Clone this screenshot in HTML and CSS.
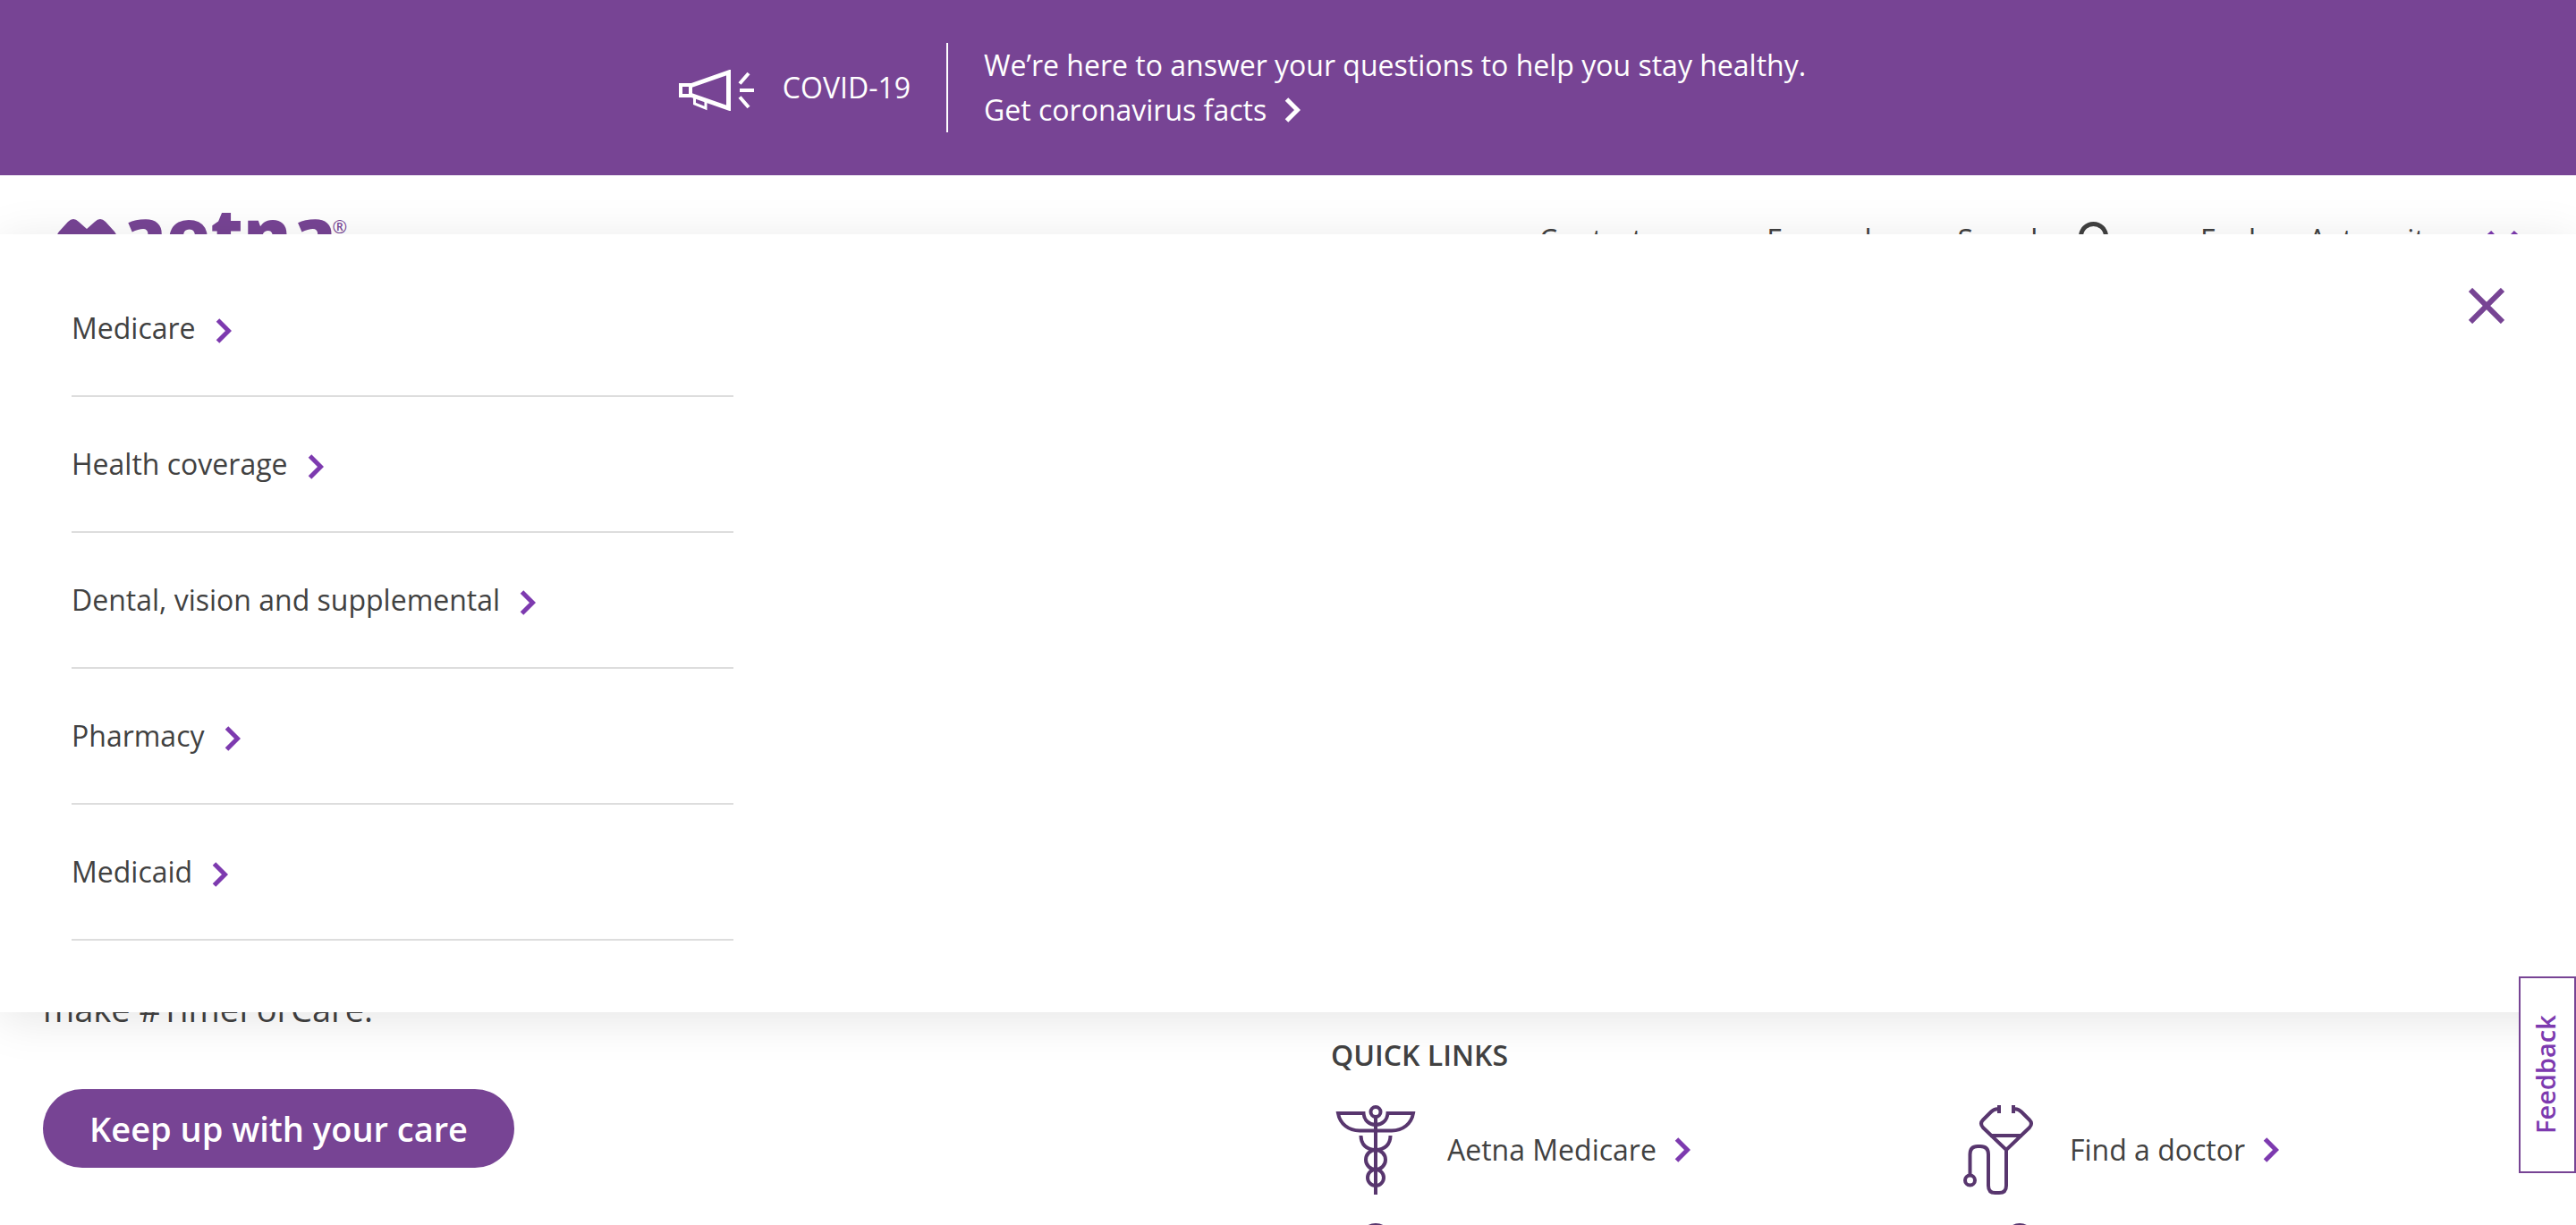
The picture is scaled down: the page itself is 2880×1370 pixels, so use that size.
FILE: index.html
```html
<!DOCTYPE html>
<html lang="en">
<head>
<meta charset="utf-8">
<title>Aetna</title>
<meta name="viewport" content="width=device-width, initial-scale=1">
<link rel="stylesheet" href="styles.css">
</head>
<body>
<svg class="sprite" aria-hidden="true">
  <symbol id="chevron" viewBox="0 0 18 28"><path d="M2.500 2 14.500 14 2.500 26" fill="none" stroke="currentColor" stroke-width="5"/></symbol>
</svg>

<aside class="alert">
  <svg class="alert-icon" viewBox="0 0 84 46" fill="none" stroke="currentColor" aria-hidden="true">
    <path d="M14 17.500 55.500 3V43L14 28.500" stroke-width="5"/>
    <path d="M2 17h11v12H2z" stroke-width="4"/>
    <path d="M17.500 31v7l12.500 5v-7" stroke-width="3"/>
    <path d="M68 15.500 78 4M68 23H84M68 30.500 78 42" stroke-width="4"/>
  </svg>
  <strong class="alert-title">COVID-19</strong>
  <div class="alert-body">
    <p>We’re here to answer your questions to help you stay healthy.</p>
    <a href="#facts">Get coronavirus facts <svg class="chevron"><use href="#chevron"/></svg></a>
  </div>
</aside>

<header class="header">
  <a class="logo" href="#home">
    <svg class="logo-mark" viewBox="0 0 68 60" aria-hidden="true"><path d="M33 60 3 27Q-3 21 2 15L12 4Q18-2 24 4L33 12 42 4Q48-2 54 4L64 15Q69 21 63 27Z" fill="currentColor"/></svg>
    <span class="logo-name">aetna</span><span class="logo-reg">®</span>
  </a>
  <nav class="nav">
    <a href="#contact">Contact us</a>
    <a href="#es">Espanol</a>
    <a class="nav-search" href="#search">Search
      <svg class="nav-icon" viewBox="0 0 40 40" fill="none" stroke="currentColor" stroke-width="5" aria-hidden="true"><circle cx="16.500" cy="16.500" r="14"/><path d="M26 26 38 38"/></svg>
    </a>
    <a class="nav-explore" href="#sites">Explore Aetna sites
      <svg class="nav-icon" viewBox="0 0 40 24" fill="none" stroke="currentColor" stroke-width="6" aria-hidden="true"><path d="M5 2 20 18 35 2"/></svg>
    </a>
  </nav>
</header>

<main class="main">
  <section class="hero">
    <p class="hero-text">make #TimeForCare.</p>
    <a class="button" href="#care">Keep up with your care</a>
  </section>
  <section class="quick">
    <h2>QUICK LINKS</h2>
    <ul class="quick-list">
      <li><a href="#medicare">
        <svg class="quick-icon" viewBox="0 0 100 100" fill="none" stroke="currentColor" stroke-width="4" aria-hidden="true">
          <circle cx="50" cy="7.500" r="5.500"/>
          <path d="M50 13V100"/>
          <path d="M50 22C43 22 37 17 36.500 9H8C10 21 20 28.500 32 28.500H68C80 28.500 90 21 92 9H63.500C63 17 57 22 50 22"/>
          <path d="M33.500 34C33.500 44 40 50 50 50M66.500 34C66.500 44 60 50 50 50"/>
          <circle cx="50" cy="61" r="11"/><circle cx="50" cy="81" r="9"/>
        </svg>
        <span>Aetna Medicare</span><svg class="chevron"><use href="#chevron"/></svg></a></li>
      <li><a href="#doctor">
        <svg class="quick-icon" viewBox="0 0 100 100" fill="none" stroke="currentColor" stroke-width="4" aria-hidden="true">
          <path d="M51 0V9M67 0V9"/>
          <path d="M51 4.500Q46 3.500 42 7.500L33 16.500Q29 20.500 33 25L59 50 85 25Q89 20.500 85 16.500L76 7.500Q72 3.500 67 4.500"/>
          <path d="M41 34H77"/>
          <path d="M59 50V90Q59 98 51 98H46.500Q39 98 39 90V55Q39 46 30 46H27Q18.500 46 18.500 55V78"/>
          <circle cx="18.500" cy="84" r="5.500"/>
        </svg>
        <span>Find a doctor</span><svg class="chevron"><use href="#chevron"/></svg></a></li>
      <li><a href="#login" aria-label="Member log in">
        <svg class="quick-icon" viewBox="0 0 100 100" fill="none" stroke="currentColor" stroke-width="4" aria-hidden="true"><circle cx="50" cy="18" r="16"/></svg></a></li>
      <li><a href="#drug" aria-label="Find a medication">
        <svg class="quick-icon" viewBox="0 0 100 100" fill="none" stroke="currentColor" stroke-width="4" aria-hidden="true"><circle cx="74" cy="16" r="14"/></svg></a></li>
    </ul>
  </section>
</main>

<nav class="panel" aria-label="Explore Aetna sites">
  <ul class="panel-list">
    <li><a href="#m1">Medicare <svg class="chevron"><use href="#chevron"/></svg></a></li>
    <li><a href="#m2">Health coverage <svg class="chevron"><use href="#chevron"/></svg></a></li>
    <li><a href="#m3">Dental, vision and supplemental <svg class="chevron"><use href="#chevron"/></svg></a></li>
    <li><a href="#m4">Pharmacy <svg class="chevron"><use href="#chevron"/></svg></a></li>
    <li><a href="#m5">Medicaid <svg class="chevron"><use href="#chevron"/></svg></a></li>
  </ul>
  <button class="close" type="button" aria-label="Close">
    <svg viewBox="0 0 40 40" stroke="currentColor" stroke-width="6" aria-hidden="true"><path d="M2 2 38 38M38 2 2 38"/></svg>
  </button>
</nav>

<button class="feedback" type="button">Feedback</button>
</body>
</html>
```
FILE: styles.css
```css
* { box-sizing: border-box; }

:root {
  --purple: #774494;
  --violet: #7d3aaf;
  --plum: #58366e;
  --ink: #414141;
}

body {
  position: relative;
  height: 100vh;
  margin: 0;
  overflow: hidden;
  background: #fff;
  color: var(--ink);
  font: 400 32px/48px "Open Sans", "Noto Sans", sans-serif;
}

a { color: inherit; text-decoration: none; }
p, h2, ul { margin: 0; padding: 0; }
ul { list-style: none; }
.sprite { display: none; }

.chevron {
  flex: none;
  width: 18px;
  height: 28px;
  color: var(--violet);
}

/* Alert banner */
.alert {
  display: flex;
  align-items: center;
  justify-content: center;
  padding: 48px 0;
  background: var(--purple);
  color: #fff;
  font-weight: 500;
}
.alert-icon { width: 84px; height: 46px; margin: 6px 32px 0 0; }
.alert-title { font-weight: 500; }
.alert-body {
  margin-left: 40px;
  padding: 0 102px 0 40px;
  border-left: 2px solid #fff;
  line-height: 50px;
}
.alert-body a { display: flex; align-items: center; gap: 20px; }
.alert-body .chevron { color: inherit; }

/* Header */
.header {
  display: flex;
  justify-content: space-between;
  padding: 40px 62px 0 64px;
  height: 160px;
}
.logo { display: flex; color: var(--purple); }
.logo-mark { width: 68px; height: 60px; margin-top: 8px; }
.logo-name { padding-left: 4px; font-weight: 800; font-size: 80px; line-height: 48px; }
.logo-reg { margin-left: -4px; font-size: 20px; line-height: 36px; }
.nav { display: flex; gap: 96px; padding-top: 8px; }
.nav-search, .nav-explore { display: flex; gap: 34px; }
.nav-explore { font-weight: 500; }
.nav-icon { width: 40px; height: 40px; margin-top: 4px; }
.nav-explore .nav-icon { height: 24px; margin-top: 14px; color: var(--violet); }

/* Page content */
.main { display: grid; grid-template-columns: 1fr 1fr; padding-top: 744px; }
.hero, .quick { padding-left: 48px; }
.hero-text { font-size: 38px; line-height: 56px; }
.button {
  display: inline-block;
  margin-top: 62px;
  padding: 0 52px;
  border-radius: 44px;
  background: var(--purple);
  color: #fff;
  font-weight: 600;
  font-size: 38px;
  line-height: 88px;
}
.quick { padding-top: 56px; }
.quick h2 { font-weight: 600; font-size: 32px; line-height: 48px; }
.quick-list {
  display: grid;
  grid-template-columns: 1fr 1fr;
  row-gap: 32px;
  padding-top: 32px;
}
.quick-list a { display: flex; align-items: center; }
.quick-icon { width: 100px; height: 100px; margin-right: 30px; color: var(--plum); }
.quick-list .chevron { margin-left: 20px; }

/* Open menu, laid over the page */
.panel {
  position: absolute;
  top: 262px;
  left: 0;
  right: 0;
  display: flex;
  justify-content: space-between;
  align-items: flex-start;
  padding: 30px 80px 80px;
  background: #fff;
  box-shadow: 0 8px 50px rgba(0, 0, 0, .1);
}
.panel-list { width: 740px; }
.panel-list li { padding: 51px 0; border-bottom: 2px solid #ddd; }
.panel-list a { display: flex; align-items: center; gap: 22px; }
.panel-list .chevron { margin-top: 6px; }
.close {
  margin-top: 30px;
  padding: 0;
  border: 0;
  background: none;
  color: var(--purple);
  line-height: 0;
}
.close svg { width: 40px; height: 40px; }

/* Feedback tab */
.feedback {
  position: absolute;
  top: 1092px;
  right: 0;
  width: 64px;
  height: 220px;
  padding: 0 0 0 4px;
  border: 2px solid var(--purple);
  background: #fff;
  color: var(--violet);
  font: 600 29px/40px "Open Sans", "Noto Sans", sans-serif;
  writing-mode: vertical-rl;
  transform: rotate(180deg);
}
```
